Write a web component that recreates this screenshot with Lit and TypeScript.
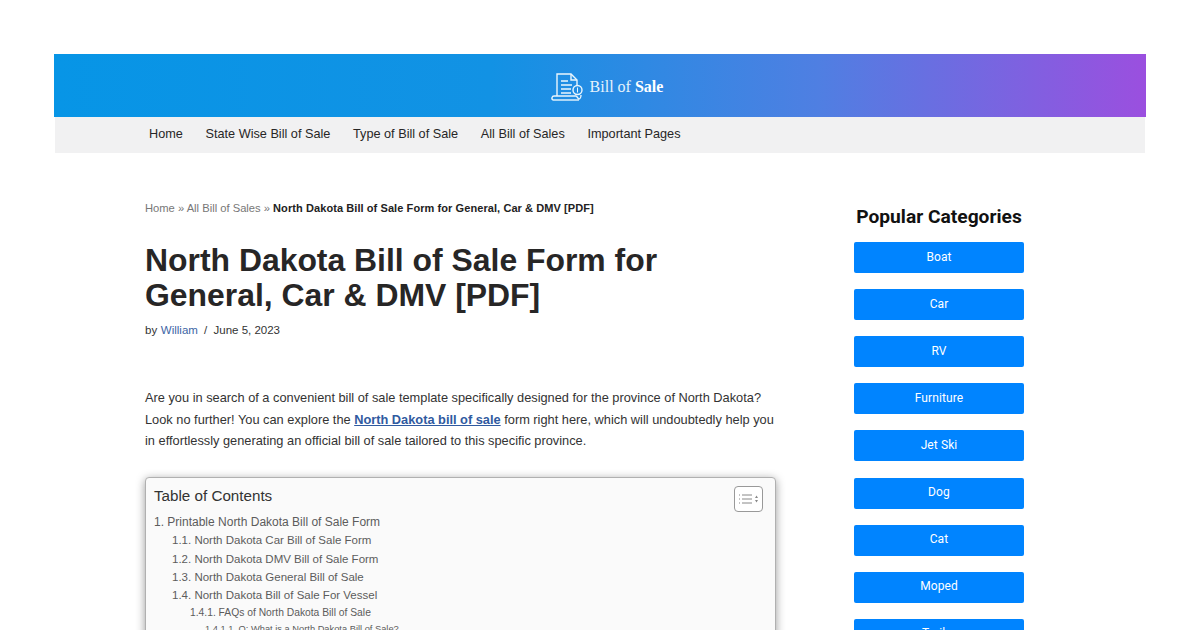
import { LitElement, html, css } from 'lit';
import { customElement } from 'lit/decorators.js';

const NAV = ['Home', 'State Wise Bill of Sale', 'Type of Bill of Sale', 'All Bill of Sales', 'Important Pages'];
const CATEGORIES = ['Boat', 'Car', 'RV', 'Furniture', 'Jet Ski', 'Dog', 'Cat', 'Moped', 'Trailer'];
const TOC = [
  { cls: 'l1', text: '1. Printable North Dakota Bill of Sale Form' },
  { cls: 'l2', text: '1.1. North Dakota Car Bill of Sale Form' },
  { cls: 'l2', text: '1.2. North Dakota DMV Bill of Sale Form' },
  { cls: 'l2', text: '1.3. North Dakota General Bill of Sale' },
  { cls: 'l2', text: '1.4. North Dakota Bill of Sale For Vessel' },
  { cls: 'l3', text: '1.4.1. FAQs of North Dakota Bill of Sale' },
  { cls: 'l4', text: '1.4.1.1. Q: What is a North Dakota Bill of Sale?' },
];

@customElement('app-root')
export class AppRoot extends LitElement {
  static styles = css`
    :host {
      display: block;
      height: 630px;
      overflow: hidden;
      background: #fff;
      font-family: 'Liberation Sans', Arial, sans-serif;
      color: #272626;
    }
    .site-head {
      margin: 0 54px;
      padding-top: 54px;
    }
    .banner {
      height: 63px;
      background: linear-gradient(90deg, #0795e6 0%, #1292e4 40%, #4f7fe2 70%, #9b4fdf 100%);
      display: flex;
      justify-content: center;
      align-items: center;
      gap: 6px;
      padding: 3px 0 0 14px;
      box-sizing: border-box;
      color: #fff;
    }
    .logo-text {
      font-family: 'Liberation Serif', serif;
      font-size: 16px;
      color: #e6f3fc;
    }
    .logo-text b { color: #fff; }
    .nav {
      height: 36px;
      margin: 0 1px;
      background: #f1f1f2;
      display: flex;
      gap: 22.7px;
      padding: 10px 0 0 94px;
      box-sizing: border-box;
      font-size: 12.7px;
      line-height: 15px;
      color: #272626;
    }
    .layout {
      display: flex;
      padding: 47px 0 0 145px;
    }
    .content { width: 631px; flex: none; }
    .crumbs {
      font-size: 11.2px;
      line-height: 16px;
      color: #777;
    }
    .crumbs b { color: #222; font-size: 11px; letter-spacing: 0.08px; }
    h1 {
      margin: 27px 0 0;
      font-size: 31.9px;
      line-height: 35px;
      font-weight: 700;
      color: #272626;
    }
    .meta {
      margin-top: 9px;
      font-size: 11.5px;
      line-height: 16px;
      color: #333;
    }
    .meta a { color: #3d65a5; margin-left: 0.5px; }
    .meta span { margin: 0 3px; }
    p {
      margin: 49px 0 0;
      font-size: 12.8px;
      line-height: 21.6px;
      color: #333;
    }
    p a { color: #2f5aa0; font-weight: 700; text-decoration: underline; }
    .toc {
      margin-top: 25px;
      height: 220px;
      border: 1px solid #b0b0b0;
      border-radius: 4px;
      background: #fafafa;
      box-shadow: 0 2px 10px rgba(0, 0, 0, 0.4);
      padding: 8px;
      box-sizing: border-box;
      width: 631px;
    }
    .toc-head {
      display: flex;
      justify-content: space-between;
      align-items: center;
      height: 20px;
      font-size: 15.2px;
      color: #333;
      margin-bottom: 7px;
    }
    .toggle {
      width: 27px;
      height: 24px;
      border: 1px solid #999;
      border-radius: 4px;
      background: #fff;
      display: flex;
      justify-content: center;
      align-items: center;
      margin: 6px 4px 0 0;
    }
    .toc-item { color: #5c5c5c; white-space: nowrap; }
    .l1 { font-size: 12px; line-height: 18.7px; }
    .l2 { font-size: 11.5px; line-height: 18.2px; padding-left: 18px; }
    .l3 { font-size: 10.3px; line-height: 17px; padding-left: 36px; }
    .l4 { font-size: 9.3px; line-height: 16px; padding-left: 51px; }
    aside {
      width: 170px;
      flex: none;
      margin-left: 78px;
      margin-top: 4px;
    }
    h2 {
      margin: 0;
      text-align: center;
      font-family: Roboto, sans-serif;
      font-size: 19.2px;
      line-height: 25px;
      font-weight: 700;
      color: #111;
      white-space: nowrap;
    }
    .cats {
      display: flex;
      flex-direction: column;
      gap: 16.1px;
      margin-top: 13.1px;
    }
    .cat {
      height: 31px;
      flex: none;
      border-radius: 2px;
      background: #0084ff;
      color: #fff;
      font-family: Roboto, sans-serif;
      font-size: 12px;
      font-weight: 400;
      letter-spacing: 0.1px;
      display: flex;
      justify-content: center;
      align-items: center;
      padding-bottom: 2px;
      box-sizing: border-box;
    }
  `;

  render() {
    return html`
      <div class="site-head">
        <div class="banner">
          <svg width="33" height="30" viewBox="0 0 33 30" fill="none" stroke="#eaf6fd" stroke-width="1.4">
            <path d="M6 24V2h14l6 6v6" />
            <path d="M20 2v6h6" />
            <path d="M10 9h7M10 13h11M10 17h10M10 21h10" />
            <circle cx="26.5" cy="18" r="4.5" />
            <path d="M26.5 15.5v5" stroke-width="1" />
            <path d="M2 28c-2-1-1-4 1-4h22c1 0 2 3 3 3s2-2 2-4" />
            <path d="M2 28h26" />
          </svg>
          <span class="logo-text">Bill of <b>Sale</b></span>
        </div>
        <div class="nav">${NAV.map((n) => html`<span>${n}</span>`)}</div>
      </div>
      <div class="layout">
        <div class="content">
          <div class="crumbs">Home » All Bill of Sales » <b>North Dakota Bill of Sale Form for General, Car &amp; DMV [PDF]</b></div>
          <h1>North Dakota Bill of Sale Form for<br />General, Car &amp; DMV [PDF]</h1>
          <div class="meta">by <a>William</a> <span>/</span> June 5, 2023</div>
          <p>
            Are you in search of a convenient bill of sale template specifically designed for the province of North Dakota?
            Look no further! You can explore the <a>North Dakota bill of sale</a> form right here, which will undoubtedly help you
            in effortlessly generating an official bill of sale tailored to this specific province.
          </p>
          <div class="toc">
            <div class="toc-head">
              <span>Table of Contents</span>
              <span class="toggle">
                <svg width="21" height="12" viewBox="0 0 21 12" fill="none" stroke="#888">
                  <path d="M1 2h1M1 6h1M1 10h1M4 2h10M4 6h10M4 10h10" />
                  <path d="M17 5l1.5-2.5 1.5 2.5zM17 7l1.5 2.5 1.5-2.5z" fill="#888" stroke="none" />
                </svg>
              </span>
            </div>
            ${TOC.map((t) => html`<div class="toc-item ${t.cls}">${t.text}</div>`)}
          </div>
        </div>
        <aside>
          <h2>Popular Categories</h2>
          <div class="cats">${CATEGORIES.map((c) => html`<div class="cat">${c}</div>`)}</div>
        </aside>
      </div>
    `;
  }
}
